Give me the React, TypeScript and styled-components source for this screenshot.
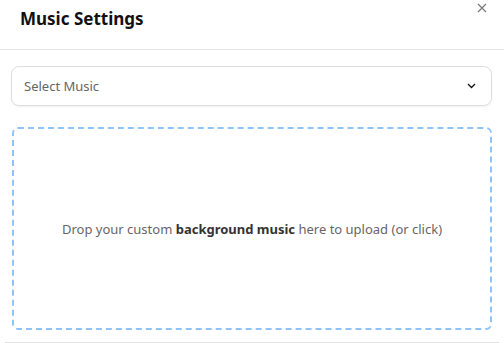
import React from "react";
import styled, { createGlobalStyle } from "styled-components";

const Global = createGlobalStyle`
  html, body { margin: 0; padding: 0; background: #fff; }
  body { font-family: "Noto Sans", "Open Sans", sans-serif; }
  * { box-sizing: border-box; }
`;

const Dialog = styled.div`
  width: 504px;
  height: 343px;
  background: #fff;
  position: relative;
  overflow: hidden;
`;

const Header = styled.div`
  height: 50px;
  padding: 6px 20px 0;
  border-bottom: 1px solid #e3e3e3;
`;

const Title = styled.h2`
  margin: 0;
  font-size: 17px;
  font-weight: 700;
  color: #111;
  line-height: 26px;
`;

const Close = styled.button`
  position: absolute;
  top: 0;
  right: 12px;
  width: 20px;
  height: 16px;
  border: none;
  background: none;
  padding: 0;
  display: flex;
  align-items: center;
  justify-content: center;
  cursor: pointer;
`;

const Body = styled.div`
  padding: 16px 12px 0 11px;
  display: flex;
  flex-direction: column;
  gap: 21px;
`;

const Select = styled.div`
  height: 40px;
  border: 1px solid #dedede;
  border-radius: 8px;
  box-shadow: 0 1px 2px rgba(0, 0, 0, 0.06);
  display: flex;
  align-items: center;
  justify-content: space-between;
  padding: 0 15px 0 12px;
`;

const Placeholder = styled.span`
  font-size: 13px;
  color: #666;
`;

const Drop = styled.div`
  height: 203px;
  margin-left: 1px;
  border: 2px dashed #8fc4fb;
  border-radius: 6px;
  display: flex;
  align-items: center;
  justify-content: center;
  font-size: 13px;
  color: #666;
`;

const Strong = styled.b`
  color: #333;
  font-weight: 700;
`;

const Footer = styled.div`
  margin: 12px 5px 0 5px;
  border-top: 1px solid #e3e3e3;
  height: 10px;
`;

export default function App() {
  return (
    <Dialog>
      <Global />
      <Header>
        <Title>Music Settings</Title>
      </Header>
      <Close aria-label="Close">
        <svg width="10" height="10" viewBox="0 0 10 10">
          <path d="M1 1L9 9M9 1L1 9" stroke="#777" strokeWidth="1.2" />
        </svg>
      </Close>
      <Body>
        <Select>
          <Placeholder>Select Music</Placeholder>
          <svg width="9" height="6" viewBox="0 0 9 6">
            <path d="M1 1L4.5 4.5L8 1" stroke="#111" strokeWidth="1.3" fill="none" />
          </svg>
        </Select>
        <Drop>
          <span>
            Drop your custom <Strong>background music</Strong> here to upload (or click)
          </span>
        </Drop>
      </Body>
      <Footer />
    </Dialog>
  );
}
